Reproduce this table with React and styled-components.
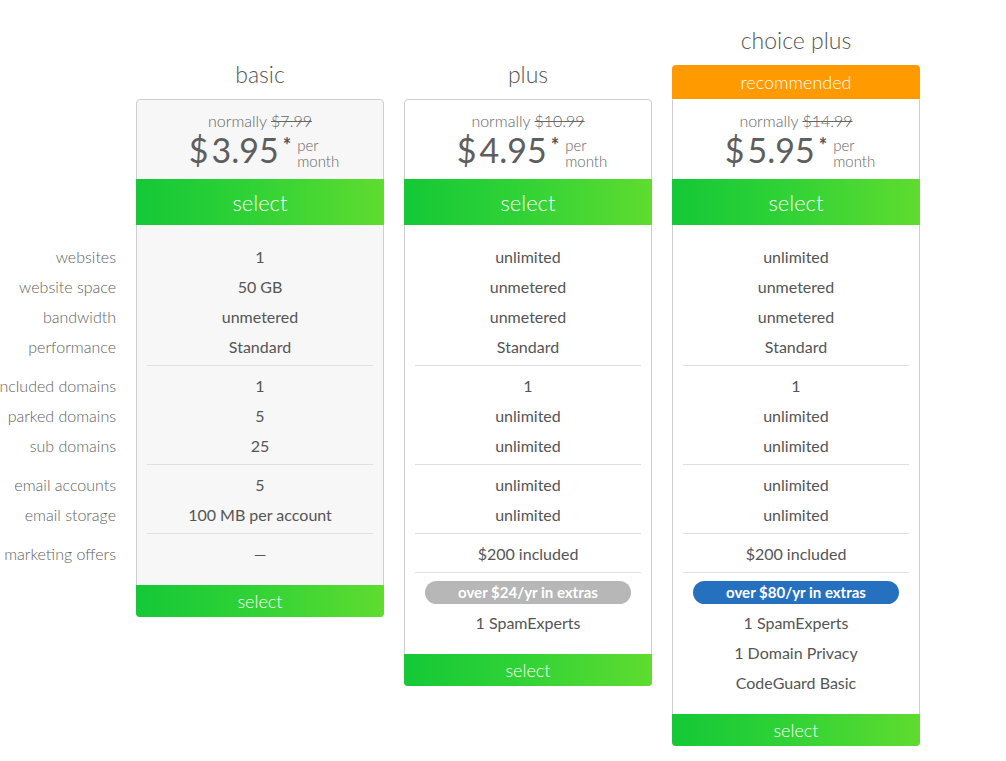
import React from "react";
import styled, { createGlobalStyle } from "styled-components";

const GlobalStyle = createGlobalStyle`
  html, body {
    margin: 0;
    padding: 0;
    background: #fff;
    overflow: hidden;
  }
  body {
    font-family: Lato, "Open Sans", sans-serif;
    color: #555;
  }
`;

const plans = [
  {
    name: "basic",
    normally: "$7.99",
    price: "3.95",
    shaded: true,
    groups: [
      ["1", "50 GB", "unmetered", "Standard"],
      ["1", "5", "25"],
      ["5", "100 MB per account"],
      ["—"],
    ],
  },
  {
    name: "plus",
    normally: "$10.99",
    price: "4.95",
    groups: [
      ["unlimited", "unmetered", "unmetered", "Standard"],
      ["1", "unlimited", "unlimited"],
      ["unlimited", "unlimited"],
      ["$200 included"],
    ],
    extras: { label: "over $24/yr in extras", tone: "gray", items: ["1 SpamExperts"] },
  },
  {
    name: "choice plus",
    normally: "$14.99",
    price: "5.95",
    recommended: true,
    groups: [
      ["unlimited", "unmetered", "unmetered", "Standard"],
      ["1", "unlimited", "unlimited"],
      ["unlimited", "unlimited"],
      ["$200 included"],
    ],
    extras: {
      label: "over $80/yr in extras",
      tone: "blue",
      items: ["1 SpamExperts", "1 Domain Privacy", "CodeGuard Basic"],
    },
  },
];

const labelGroups = [
  ["websites", "website space", "bandwidth", "performance"],
  ["included domains", "parked domains", "sub domains"],
  ["email accounts", "email storage"],
  ["marketing offers"],
];

const App = () => (
  <>
    <GlobalStyle />
    <Page>
      <Labels>
        {labelGroups.map((group, gi) => (
          <LabelGroup key={gi}>
            {group.map((label) => (
              <Label key={label}>{label}</Label>
            ))}
          </LabelGroup>
        ))}
      </Labels>
      {plans.map((plan) => (
        <Column key={plan.name}>
          <Head>
            <Title>{plan.name}</Title>
            {plan.recommended && <Recommended>recommended</Recommended>}
          </Head>
          <Card $shaded={plan.shaded} $flatTop={plan.recommended}>
            <PriceBox>
              <Normally>
                normally <s>{plan.normally}</s>
              </Normally>
              <PriceRow>
                <Amount>
                  <Dollar>$</Dollar>
                  {plan.price}
                </Amount>
                <Star>*</Star>
                <Per>
                  per
                  <br />
                  month
                </Per>
              </PriceRow>
            </PriceBox>
            <SelectButton $size="large">select</SelectButton>
            <Body>
              {plan.groups.map((group, gi) => (
                <React.Fragment key={gi}>
                  {gi > 0 && <Divider />}
                  {group.map((value, vi) => (
                    <Row key={vi}>{value}</Row>
                  ))}
                </React.Fragment>
              ))}
              {plan.extras && (
                <>
                  <Divider />
                  <Row>
                    <Badge $tone={plan.extras.tone}>{plan.extras.label}</Badge>
                  </Row>
                  {plan.extras.items.map((item) => (
                    <Row key={item}>{item}</Row>
                  ))}
                </>
              )}
            </Body>
            <SelectButton $size="small">select</SelectButton>
          </Card>
        </Column>
      ))}
    </Page>
  </>
);

const Page = styled.div`
  display: flex;
  align-items: flex-start;
  gap: 20px;
  width: 1006px;
`;

const Labels = styled.div`
  width: 116px;
  flex-shrink: 0;
  padding-top: 241px;
  display: flex;
  flex-direction: column;
  gap: 9px;
`;

const LabelGroup = styled.div`
  display: flex;
  flex-direction: column;
`;

const Label = styled.div`
  height: 30px;
  display: flex;
  align-items: center;
  justify-content: flex-end;
  white-space: nowrap;
  font-size: 16px;
  font-weight: 300;
  color: #5f5f5f;
`;

const Column = styled.div`
  width: 248px;
  flex-shrink: 0;
  display: flex;
  flex-direction: column;
`;

const Head = styled.div`
  height: 99px;
  display: flex;
  flex-direction: column;
  justify-content: flex-end;
`;

const Title = styled.h2`
  margin: 0 0 10px;
  text-align: center;
  font-size: 23px;
  line-height: 30px;
  font-weight: 300;
  color: #555;
`;

const Recommended = styled.div`
  height: 34px;
  display: flex;
  align-items: center;
  justify-content: center;
  background: #ff9a00;
  color: #fff;
  font-size: 18px;
  font-weight: 300;
  border-radius: 4px 4px 0 0;
`;

const Card = styled.div`
  border: 1px solid #cfcfcf;
  border-top-color: ${(p) => (p.$flatTop ? "transparent" : "#cfcfcf")};
  border-radius: ${(p) => (p.$flatTop ? "0 0 4px 4px" : "4px")};
  background: ${(p) => (p.$shaded ? "#f7f7f7" : "#fff")};
  display: flex;
  flex-direction: column;
`;

const PriceBox = styled.div`
  height: 79px;
  padding-top: 10px;
  box-sizing: border-box;
  text-align: center;
`;

const Normally = styled.div`
  font-size: 16px;
  line-height: 22px;
  font-weight: 300;
  color: #666;
  s {
    color: #666;
  }
`;

const PriceRow = styled.div`
  display: flex;
  justify-content: center;
  align-items: flex-start;
  padding-left: 8px;
`;

const Amount = styled.span`
  font-size: 34px;
  line-height: 36px;
  font-weight: 400;
  color: #5e5e5e;
`;

const Dollar = styled.span`
  margin-right: 3px;
`;

const Star = styled.span`
  font-size: 20px;
  line-height: 20px;
  font-weight: 700;
  color: #555;
  margin: 3px 6px 0 4px;
`;

const Per = styled.span`
  margin-top: 5px;
  font-size: 15px;
  line-height: 16px;
  font-weight: 300;
  color: #666;
  text-align: left;
`;

const SelectButton = styled.div`
  margin: ${(p) => (p.$size === "large" ? "0 -1px" : "0 -1px -1px")};
  height: ${(p) => (p.$size === "large" ? "46px" : "32px")};
  display: flex;
  align-items: center;
  justify-content: center;
  background: linear-gradient(90deg, #14c837 0%, #2fd236 45%, #5fdc2f 100%);
  color: #fff;
  font-size: ${(p) => (p.$size === "large" ? "22px" : "18px")};
  font-weight: 300;
  border-radius: ${(p) => (p.$size === "large" ? "0" : "0 0 4px 4px")};
  cursor: pointer;
`;

const Body = styled.div`
  padding: 16px 0 17px;
  display: flex;
  flex-direction: column;
`;

const Row = styled.div`
  height: 30px;
  display: flex;
  align-items: center;
  justify-content: center;
  font-size: 16px;
  font-weight: 400;
  color: #555;
`;

const Divider = styled.div`
  height: 1px;
  margin: 4px 10px;
  background: #e0e0e0;
`;

const Badge = styled.div`
  flex: 1;
  margin: 0 20px;
  height: 23px;
  border-radius: 12px;
  display: flex;
  align-items: center;
  justify-content: center;
  background: ${(p) => (p.$tone === "blue" ? "#2671bf" : "#b7b7b7")};
  color: #fff;
  font-size: 15px;
  font-weight: 700;
`;

export default App;
